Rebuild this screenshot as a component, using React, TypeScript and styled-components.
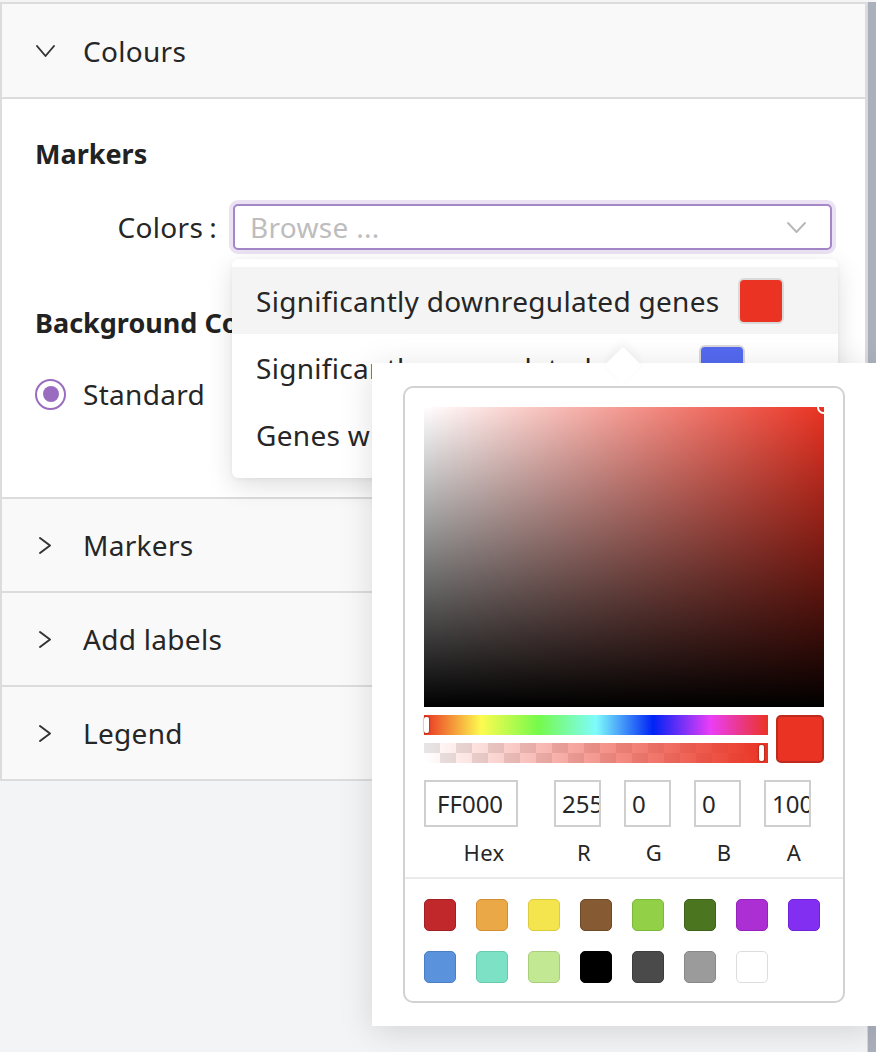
import styled, { createGlobalStyle } from "styled-components";

const font = `"Noto Sans", "Open Sans", "DejaVu Sans", sans-serif`;

const GlobalStyle = createGlobalStyle`
  html, body {
    margin: 0;
    padding: 0;
    overflow: hidden;
  }
  body {
    font-family: ${font};
    color: #262626;
    background: #f3f4f6;
    letter-spacing: 0.3px;
  }
  * {
    box-sizing: border-box;
  }
`;

const S_Page = styled.div`
  position: relative;
  display: flex;
  width: 876px;
  height: 1052px;
  padding-top: 2px;
  background: #f3f4f6;
`;

const S_Main = styled.div`
  flex: 1;
  display: flex;
  flex-direction: column;
`;

const S_Scrollbar = styled.div`
  width: 12px;
  border-left: 1px solid #d6d8de;
  background: #aab0bc;
`;

const S_Accordion = styled.div`
  border: 2px solid #dcdcdc;
  border-bottom: none;
  background: #f9f9f9;
`;

const S_Item = styled.section`
  border-bottom: 2px solid #dcdcdc;
`;

const S_ItemHeader = styled.div<{ $open?: boolean }>`
  height: ${(p) => (p.$open ? 93 : 92)}px;
  display: flex;
  align-items: center;
  gap: 28px;
  padding-left: 33px;
  font-size: 28px;
  color: #262626;
  background: #f9f9f9;
`;

const S_IconSlot = styled.span`
  width: 20px;
  display: flex;
  justify-content: center;
`;

const S_ItemBody = styled.div`
  position: relative;
  height: 400px;
  padding: 37px 33px 0;
  background: #fff;
  border-top: 2px solid #dcdcdc;
`;

const S_Heading = styled.h3<{ $gap?: number }>`
  margin: ${(p) => p.$gap ?? 0}px 0 0;
  font-size: 27px;
  font-weight: 700;
  color: #222;
  line-height: 36px;
  letter-spacing: 0;
  white-space: nowrap;
`;

const S_FieldRow = styled.div`
  display: flex;
  align-items: center;
  margin-top: 32px;
`;

const S_Label = styled.label`
  width: 182px;
  margin-right: 16px;
  text-align: right;
  font-size: 28px;
  white-space: nowrap;
  span {
    margin-left: 6px;
  }
`;

const S_SelectWrap = styled.div`
  position: relative;
  width: 599px;
`;

const S_Select = styled.div`
  height: 46px;
  display: flex;
  align-items: center;
  justify-content: space-between;
  padding: 0 24px 0 15px;
  border: 2px solid #a586c6;
  border-radius: 5px;
  box-shadow: 0 0 0 4px #ebe3f3;
  background: #fff;
  font-size: 28px;
  color: #bdbdbd;
`;

const S_Menu = styled.ul`
  position: absolute;
  top: 55px;
  left: -1px;
  width: 606px;
  margin: 0;
  padding: 8px 0 10px;
  list-style: none;
  background: #fff;
  border-radius: 6px;
  box-shadow: 0 8px 26px rgba(0, 0, 0, 0.13), 0 1px 4px rgba(0, 0, 0, 0.05);
  z-index: 2;
`;

const S_Option = styled.li<{ $active?: boolean }>`
  height: 67px;
  display: flex;
  align-items: center;
  gap: 18px;
  padding-left: 24px;
  font-size: 28px;
  color: #262626;
  background: ${(p) => (p.$active ? "#f4f4f4" : "#fff")};
  white-space: nowrap;
`;

const S_OptionSwatch = styled.span<{ $color: string }>`
  flex: none;
  width: 46px;
  height: 46px;
  border-radius: 6px;
  border: 2px solid #d9d9d9;
  background: ${(p) => p.$color};
`;

const S_RadioRow = styled.div`
  display: flex;
  align-items: center;
  gap: 17px;
  margin-top: 34px;
  font-size: 28px;
`;

const S_Radio = styled.span`
  width: 31px;
  height: 31px;
  border-radius: 50%;
  border: 2px solid #9a6cc0;
  display: flex;
  align-items: center;
  justify-content: center;
  &::after {
    content: "";
    width: 16px;
    height: 16px;
    border-radius: 50%;
    background: #9a6cc0;
  }
`;

const S_Popover = styled.div`
  position: absolute;
  left: 372px;
  top: 363px;
  width: 504px;
  padding: 23px 31px;
  background: #fff;
  box-shadow: 0 6px 32px rgba(0, 0, 0, 0.13);
  z-index: 3;
  &::before {
    content: "";
    position: absolute;
    left: 238px;
    top: -11px;
    width: 26px;
    height: 26px;
    background: #fff;
    transform: rotate(45deg);
    border-radius: 3px;
    box-shadow: -3px -3px 10px rgba(0, 0, 0, 0.05);
  }
`;

const S_Picker = styled.div`
  position: relative;
  border: 2px solid #d2d2d2;
  border-radius: 10px;
  background: #fff;
`;

const S_PickerTop = styled.div`
  padding: 19px 19px 0;
`;

const S_Saturation = styled.div<{ $hue: string }>`
  position: relative;
  height: 300px;
  overflow: hidden;
  background: linear-gradient(to top, #000, rgba(0, 0, 0, 0)),
    linear-gradient(to right, #fff, rgba(255, 255, 255, 0)), ${(p) => p.$hue};
`;

const S_SatHandle = styled.span`
  position: absolute;
  top: -6px;
  right: -6px;
  width: 13px;
  height: 13px;
  border-radius: 50%;
  border: 2px solid #fff;
  box-shadow: 0 0 1px rgba(0, 0, 0, 0.4);
`;

const S_Controls = styled.div`
  display: flex;
  gap: 8px;
  margin-top: 8px;
`;

const S_Bars = styled.div`
  flex: 1;
  display: flex;
  flex-direction: column;
  gap: 8px;
`;

const S_Bar = styled.div`
  position: relative;
  height: 20px;
`;

const S_HueBar = styled(S_Bar)`
  background: linear-gradient(
    to right,
    #ea3323 0%,
    #fdfb50 16.6%,
    #75fa4c 33.3%,
    #7ffcfc 50%,
    #0023f5 66.6%,
    #ea3ef7 83.3%,
    #ea3323 100%
  );
`;

const S_AlphaBar = styled(S_Bar)<{ $color: string }>`
  background: linear-gradient(to right, rgba(234, 51, 35, 0), ${(p) => p.$color}),
    conic-gradient(#fff 0 25%, #e6e6e6 0 50%, #fff 0 75%, #e6e6e6 0) 0 0 / 32px
      20px;
`;

const S_BarHandle = styled.span<{ $side: "left" | "right" }>`
  position: absolute;
  top: 2px;
  ${(p) => (p.$side === "left" ? "left: 0;" : "right: 4px;")}
  width: 5px;
  height: 16px;
  border-radius: 2px;
  background: #fff;
  box-shadow: 0 0 1px 1px rgba(0, 0, 0, 0.2);
`;

const S_Preview = styled.div<{ $color: string }>`
  width: 48px;
  height: 48px;
  border-radius: 5px;
  border: 2px solid #bf2a1f;
  background: ${(p) => p.$color};
`;

const S_Fields = styled.div`
  display: flex;
  gap: 10px;
  margin-top: 17px;
  padding-bottom: 10px;
`;

const S_Field = styled.div<{ $wide?: boolean }>`
  flex: ${(p) => (p.$wide ? 2 : 1)};
  display: flex;
  flex-direction: column;
  align-items: center;
`;

const S_FieldInput = styled.input<{ $wide?: boolean }>`
  align-self: flex-start;
  width: 78%;
  height: 47px;
  padding: ${(p) => (p.$wide ? "0 14px 0 11px" : "0 0 0 6px")};
  border: 2px solid #cfcfcf;
  border-radius: 0;
  outline: none;
  font-family: ${font};
  font-size: 24px;
  letter-spacing: 0;
  color: #262626;
  background: #fff;
`;

const S_FieldLabel = styled.span`
  margin-top: 10px;
  font-size: 22px;
  color: #262626;
`;

const S_Presets = styled.div`
  display: grid;
  grid-template-columns: repeat(8, 32px);
  gap: 20px;
  padding: 20px 19px 18px;
  border-top: 2px solid #ebebeb;
`;

const S_Preset = styled.span<{ $color: string; $edge: string }>`
  width: 32px;
  height: 32px;
  border-radius: 5px;
  background: ${(p) => p.$color};
  border: 1px solid ${(p) => p.$edge};
`;

const ChevronDown = ({ color = "#333", w = 17, h = 10 }: { color?: string; w?: number; h?: number }) => (
  <svg width={w + 2} height={h + 2} viewBox={`0 0 ${w + 2} ${h + 2}`} fill="none">
    <polyline
      points={`1,1 ${w / 2 + 1},${h + 1} ${w + 1},1`}
      stroke={color}
      strokeWidth="1.9"
      strokeLinecap="round"
      strokeLinejoin="round"
    />
  </svg>
);

const ChevronRight = ({ color = "#333" }: { color?: string }) => (
  <svg width="14" height="19" viewBox="0 0 14 19" fill="none">
    <polyline points="2,2 12,9.5 2,17" stroke={color} strokeWidth="2" strokeLinecap="round" strokeLinejoin="round" />
  </svg>
);

const options = [
  { label: "Significantly downregulated genes", color: "#ea3323" },
  { label: "Significantly upregulated genes", color: "#5469f0" },
  { label: "Genes with no significant change", color: "#9b9b9b" },
];

const presets = [
  ["#c0282c", "#a12025"],
  ["#eba846", "#d38d33"],
  ["#f4e44e", "#dccb3c"],
  ["#865a33", "#6f4a28"],
  ["#92d048", "#7db83a"],
  ["#4c7520", "#3e6219"],
  ["#ac2fd3", "#9523ba"],
  ["#832ff1", "#7022d9"],
  ["#5b92dc", "#4a7fc6"],
  ["#7de1c5", "#67c9ad"],
  ["#c3e893", "#a9cf7b"],
  ["#000000", "#000000"],
  ["#4a4a4a", "#3d3d3d"],
  ["#9b9b9b", "#888888"],
  ["#ffffff", "#dddddd"],
];

const fields = [
  { label: "Hex", value: "FF0000", wide: true },
  { label: "R", value: "255" },
  { label: "G", value: "0" },
  { label: "B", value: "0" },
  { label: "A", value: "100" },
];

const collapsed = ["Markers", "Add labels", "Legend"];

const App = () => {
  const red = "#ea3323";

  return (
    <>
      <GlobalStyle />
      <S_Page>
        <S_Main>
          <S_Accordion>
            <S_Item>
              <S_ItemHeader $open>
                <S_IconSlot>
                  <ChevronDown />
                </S_IconSlot>
                Colours
              </S_ItemHeader>
              <S_ItemBody>
                <S_Heading>Markers</S_Heading>
                <S_FieldRow>
                  <S_Label>
                    Colors<span>:</span>
                  </S_Label>
                  <S_SelectWrap>
                    <S_Select>
                      Browse ...
                      <ChevronDown color="#b8b8b8" w={17} h={9} />
                    </S_Select>
                    <S_Menu>
                      {options.map((o, i) => (
                        <S_Option key={o.label} $active={i === 0}>
                          {o.label}
                          <S_OptionSwatch $color={o.color} />
                        </S_Option>
                      ))}
                    </S_Menu>
                  </S_SelectWrap>
                </S_FieldRow>
                <S_Heading $gap={55}>Background Colour</S_Heading>
                <S_RadioRow>
                  <S_Radio />
                  Standard
                </S_RadioRow>
              </S_ItemBody>
            </S_Item>
            {collapsed.map((title) => (
              <S_Item key={title}>
                <S_ItemHeader>
                  <S_IconSlot>
                    <ChevronRight />
                  </S_IconSlot>
                  {title}
                </S_ItemHeader>
              </S_Item>
            ))}
          </S_Accordion>
        </S_Main>
        <S_Scrollbar />

        <S_Popover>
          <S_Picker>
            <S_PickerTop>
              <S_Saturation $hue={red}>
                <S_SatHandle />
              </S_Saturation>
              <S_Controls>
                <S_Bars>
                  <S_HueBar>
                    <S_BarHandle $side="left" />
                  </S_HueBar>
                  <S_AlphaBar $color={red}>
                    <S_BarHandle $side="right" />
                  </S_AlphaBar>
                </S_Bars>
                <S_Preview $color={red} />
              </S_Controls>
              <S_Fields>
                {fields.map((f) => (
                  <S_Field key={f.label} $wide={f.wide}>
                    <S_FieldInput readOnly value={f.value} $wide={f.wide} />
                    <S_FieldLabel>{f.label}</S_FieldLabel>
                  </S_Field>
                ))}
              </S_Fields>
            </S_PickerTop>
            <S_Presets>
              {presets.map(([c, e]) => (
                <S_Preset key={c} $color={c} $edge={e} />
              ))}
            </S_Presets>
          </S_Picker>
        </S_Popover>
      </S_Page>
    </>
  );
};

export default App;
